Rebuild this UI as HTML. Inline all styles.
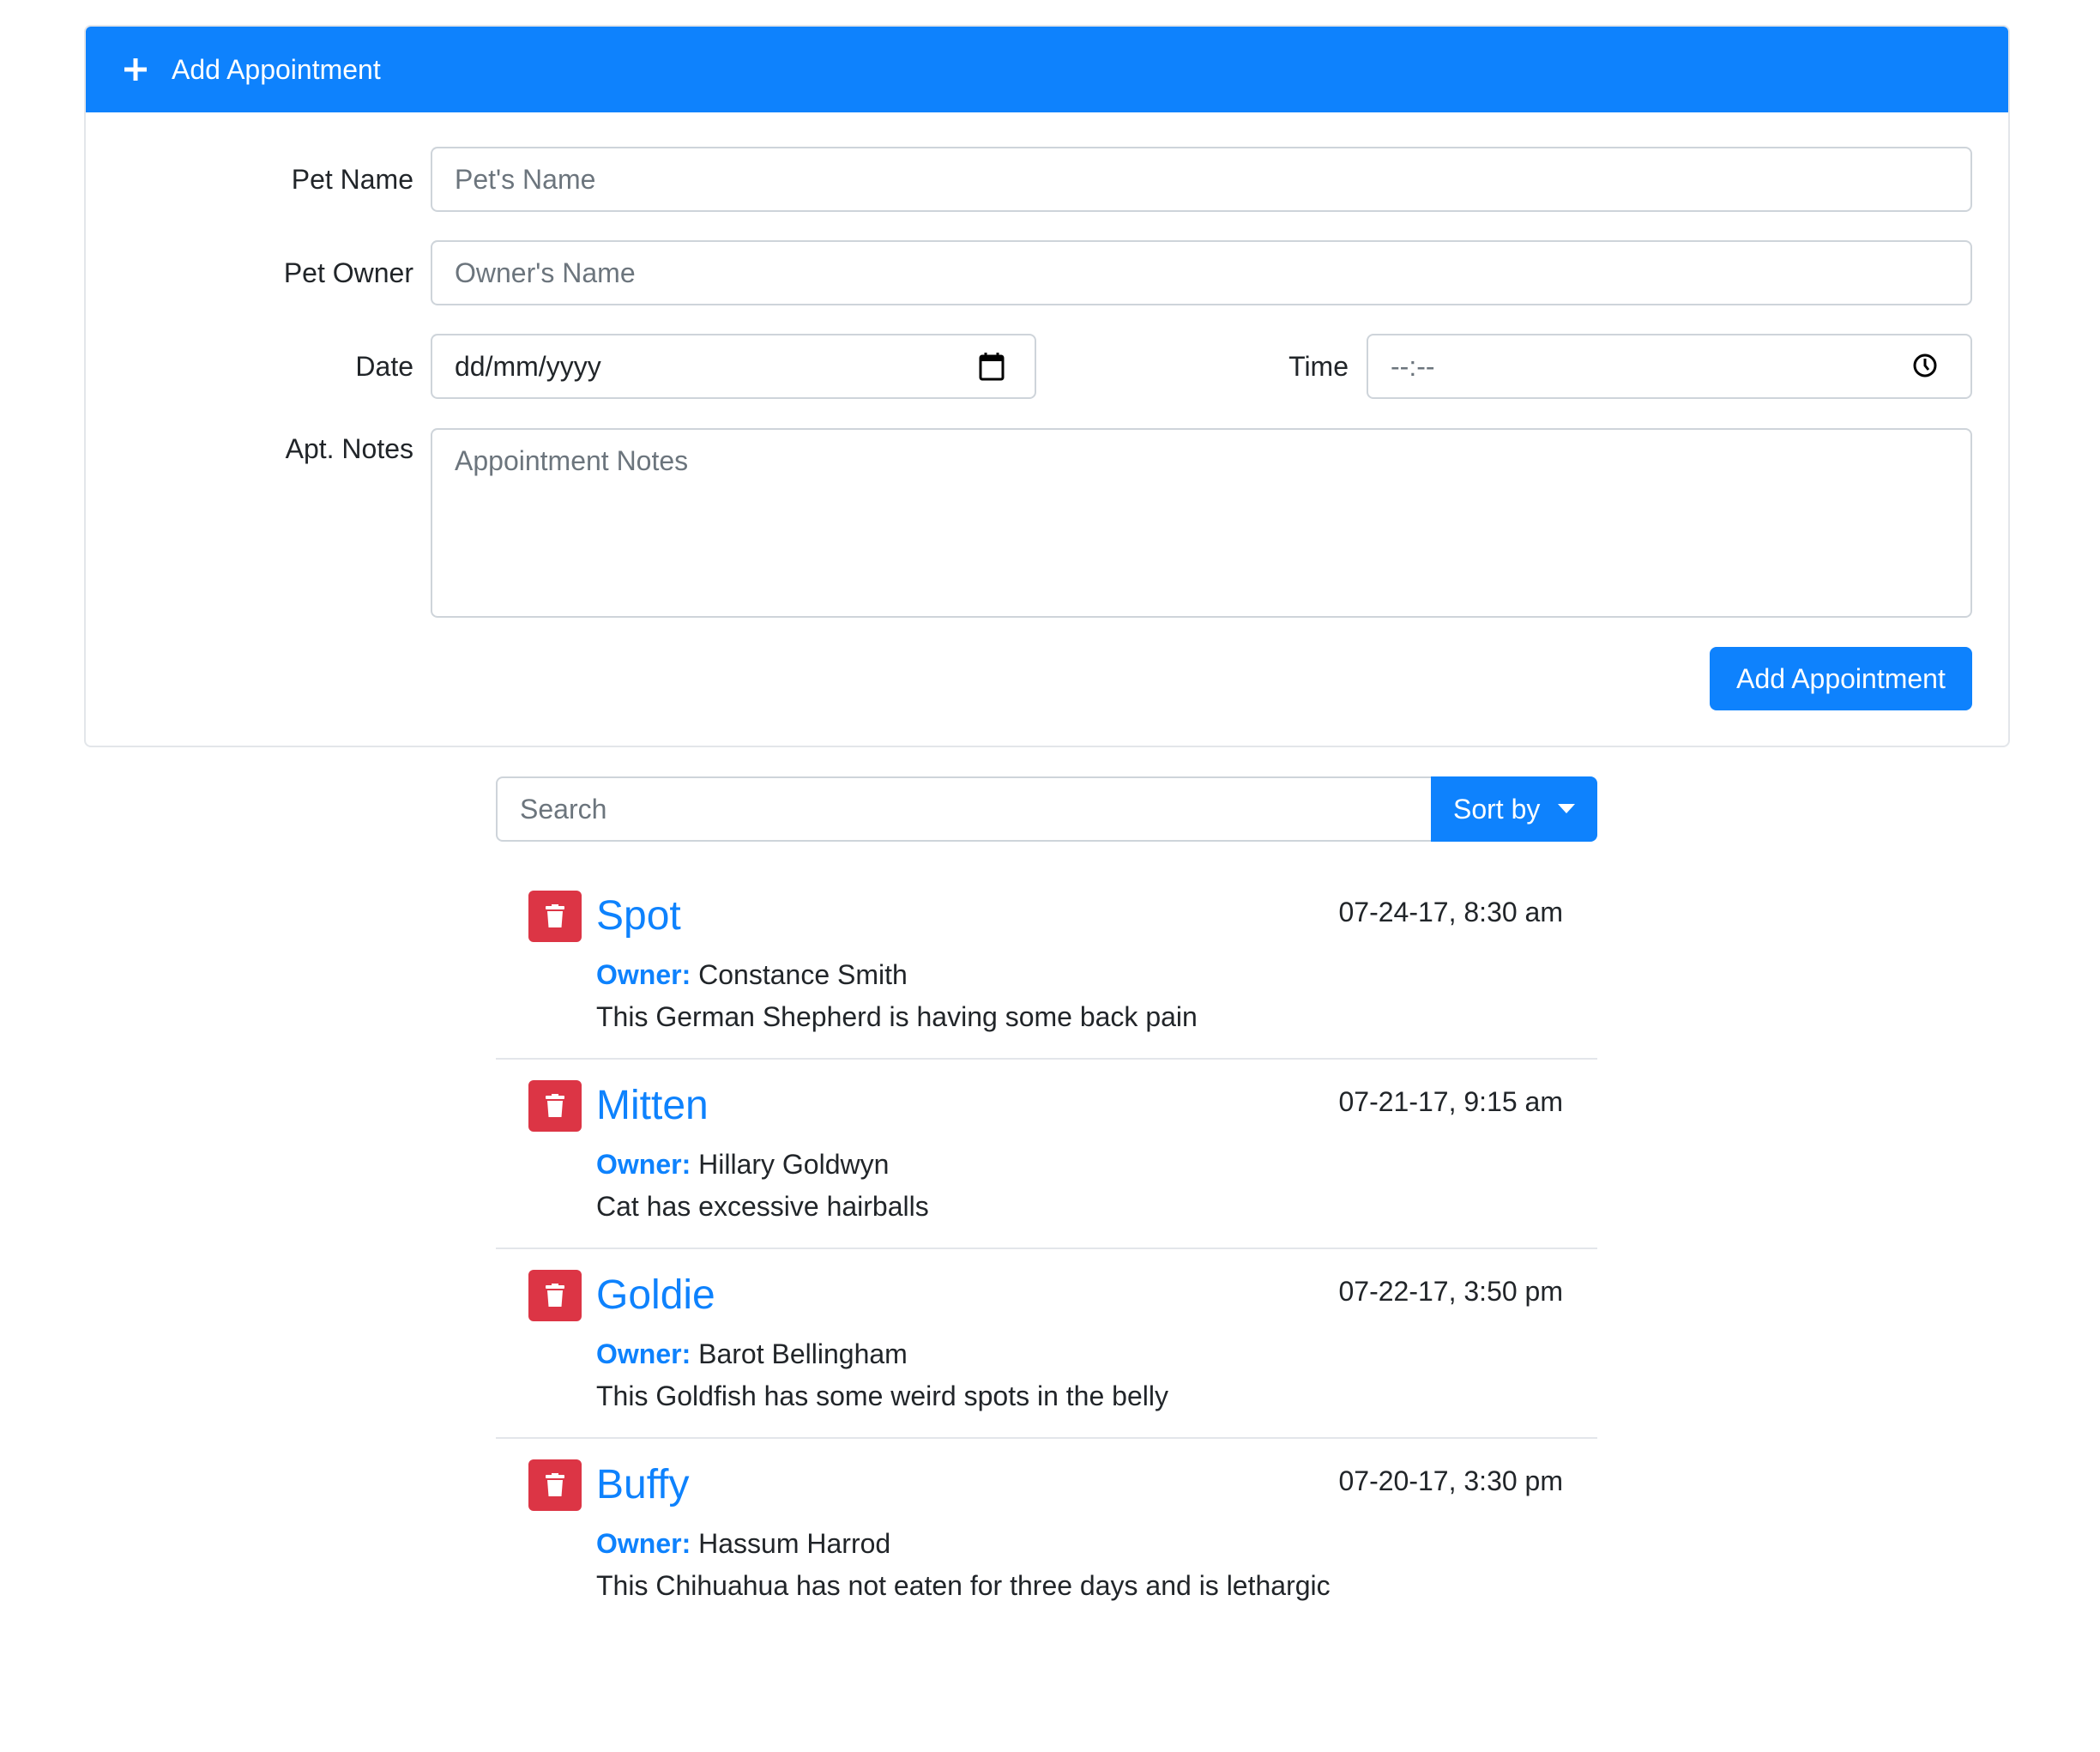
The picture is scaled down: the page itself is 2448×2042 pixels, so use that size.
<!DOCTYPE html>
<html><head><meta charset="utf-8"><style>
*{box-sizing:border-box;margin:0;padding:0}
body{width:2448px;height:2042px;background:#fff;font-family:"Liberation Sans",Helvetica,Arial,sans-serif;color:#212529;position:relative;overflow:hidden;font-size:32px}
.a{position:absolute}
.card{left:98px;top:29px;width:2245px;height:842px;border:2px solid #e3e6ea;border-radius:8px;overflow:hidden}
.hdr{left:0;top:0;width:100%;height:100px;background:#0e82fd;color:#fff}
.lbl{text-align:right;width:300px;line-height:76px}
.inp{border:2px solid #ced4da;border-radius:8px;height:76px;line-height:72px;padding-left:26px;color:#6c757d;background:#fff}
.btn{background:#0e82fd;color:#fff;border-radius:8px;text-align:center}
.trash{width:62px;height:60px;background:#dc3545;border-radius:6px}
.name{color:#0e82fd;font-size:48px;line-height:60px}
.dt{text-align:right;width:400px;line-height:44px}
.own{line-height:48px}
.own b{color:#0e82fd}
.sep{height:2px;background:#e3e6ea;width:1284px;left:578px}
</style></head><body>
<div class="a card">
 <div class="a hdr">
  <svg class="a" style="left:42px;top:34px" width="32" height="32" viewBox="0 0 32 32"><path d="M16 3V29M3 16H29" stroke="#fff" stroke-width="5"/></svg>
  <div class="a" style="left:100px;top:0;line-height:100px">Add Appointment</div>
 </div>
</div>
<div class="a lbl" style="left:182px;top:171px">Pet Name</div>
<div class="a inp" style="left:502px;top:171px;width:1797px">Pet's Name</div>
<div class="a lbl" style="left:182px;top:280px">Pet Owner</div>
<div class="a inp" style="left:502px;top:280px;width:1797px">Owner's Name</div>
<div class="a lbl" style="left:182px;top:389px">Date</div>
<div class="a inp" style="left:502px;top:389px;width:706px;color:#212529">dd/mm/yyyy
 <svg class="a" style="left:636px;top:18px" width="32" height="36" viewBox="0 0 32 36"><rect x="3" y="6" width="26" height="27" rx="2" fill="none" stroke="#000" stroke-width="3"/><rect x="3" y="6" width="26" height="6" fill="#000"/><path d="M9 2V8M23 2V8" stroke="#000" stroke-width="3"/></svg>
</div>
<div class="a lbl" style="left:1272px;top:389px">Time</div>
<div class="a inp" style="left:1593px;top:389px;width:706px;color:#6c757d">--:--
 <svg class="a" style="left:634px;top:20px" width="30" height="30" viewBox="0 0 30 30"><circle cx="15" cy="15" r="12" fill="none" stroke="#000" stroke-width="3"/><path d="M15 7V15L19 20" stroke="#000" stroke-width="3" fill="none"/></svg>
</div>
<div class="a lbl" style="left:182px;top:499px;line-height:48px">Apt. Notes</div>
<div class="a inp" style="left:502px;top:499px;width:1797px;height:221px;line-height:48px;padding-top:12px">Appointment Notes</div>
<div class="a btn" style="left:1993px;top:754px;width:306px;height:74px;line-height:74px">Add Appointment</div>

<div class="a inp" style="left:578px;top:905px;width:1100px;border-radius:8px 0 0 8px">Search</div>
<div class="a btn" style="left:1668px;top:905px;width:194px;height:76px;line-height:76px;border-radius:0 8px 8px 0;text-align:left;padding-left:26px">Sort by
 <svg class="a" style="left:148px;top:32px" width="20" height="12" viewBox="0 0 20 12"><path d="M0 0H20L10 11Z" fill="#fff"/></svg>
</div>

<div class="a trash" style="left:616px;top:1038px"><svg class="a" style="left:19px;top:16px" width="24" height="28" viewBox="0 0 24 28"><rect x="1" y="2" width="22" height="4" rx="1" fill="#fff"/><rect x="8" y="0" width="8" height="3" fill="#fff"/><path d="M3 8H21L19.5 27H4.5Z" fill="#fff"/></svg></div>
<div class="a name" style="left:695px;top:1038px">Spot</div>
<div class="a dt" style="left:1422px;top:1041px">07-24-17, 8:30 am</div>
<div class="a own" style="left:695px;top:1112px"><b>Owner:</b> Constance Smith</div>
<div class="a own" style="left:695px;top:1161px">This German Shepherd is having some back pain</div>
<div class="a sep" style="top:1233px"></div>

<div class="a trash" style="left:616px;top:1259px"><svg class="a" style="left:19px;top:16px" width="24" height="28" viewBox="0 0 24 28"><rect x="1" y="2" width="22" height="4" rx="1" fill="#fff"/><rect x="8" y="0" width="8" height="3" fill="#fff"/><path d="M3 8H21L19.5 27H4.5Z" fill="#fff"/></svg></div>
<div class="a name" style="left:695px;top:1259px">Mitten</div>
<div class="a dt" style="left:1422px;top:1262px">07-21-17, 9:15 am</div>
<div class="a own" style="left:695px;top:1333px"><b>Owner:</b> Hillary Goldwyn</div>
<div class="a own" style="left:695px;top:1382px">Cat has excessive hairballs</div>
<div class="a sep" style="top:1454px"></div>

<div class="a trash" style="left:616px;top:1480px"><svg class="a" style="left:19px;top:16px" width="24" height="28" viewBox="0 0 24 28"><rect x="1" y="2" width="22" height="4" rx="1" fill="#fff"/><rect x="8" y="0" width="8" height="3" fill="#fff"/><path d="M3 8H21L19.5 27H4.5Z" fill="#fff"/></svg></div>
<div class="a name" style="left:695px;top:1480px">Goldie</div>
<div class="a dt" style="left:1422px;top:1483px">07-22-17, 3:50 pm</div>
<div class="a own" style="left:695px;top:1554px"><b>Owner:</b> Barot Bellingham</div>
<div class="a own" style="left:695px;top:1603px">This Goldfish has some weird spots in the belly</div>
<div class="a sep" style="top:1675px"></div>

<div class="a trash" style="left:616px;top:1701px"><svg class="a" style="left:19px;top:16px" width="24" height="28" viewBox="0 0 24 28"><rect x="1" y="2" width="22" height="4" rx="1" fill="#fff"/><rect x="8" y="0" width="8" height="3" fill="#fff"/><path d="M3 8H21L19.5 27H4.5Z" fill="#fff"/></svg></div>
<div class="a name" style="left:695px;top:1701px">Buffy</div>
<div class="a dt" style="left:1422px;top:1704px">07-20-17, 3:30 pm</div>
<div class="a own" style="left:695px;top:1775px"><b>Owner:</b> Hassum Harrod</div>
<div class="a own" style="left:695px;top:1824px">This Chihuahua has not eaten for three days and is lethargic</div>
</body></html>
